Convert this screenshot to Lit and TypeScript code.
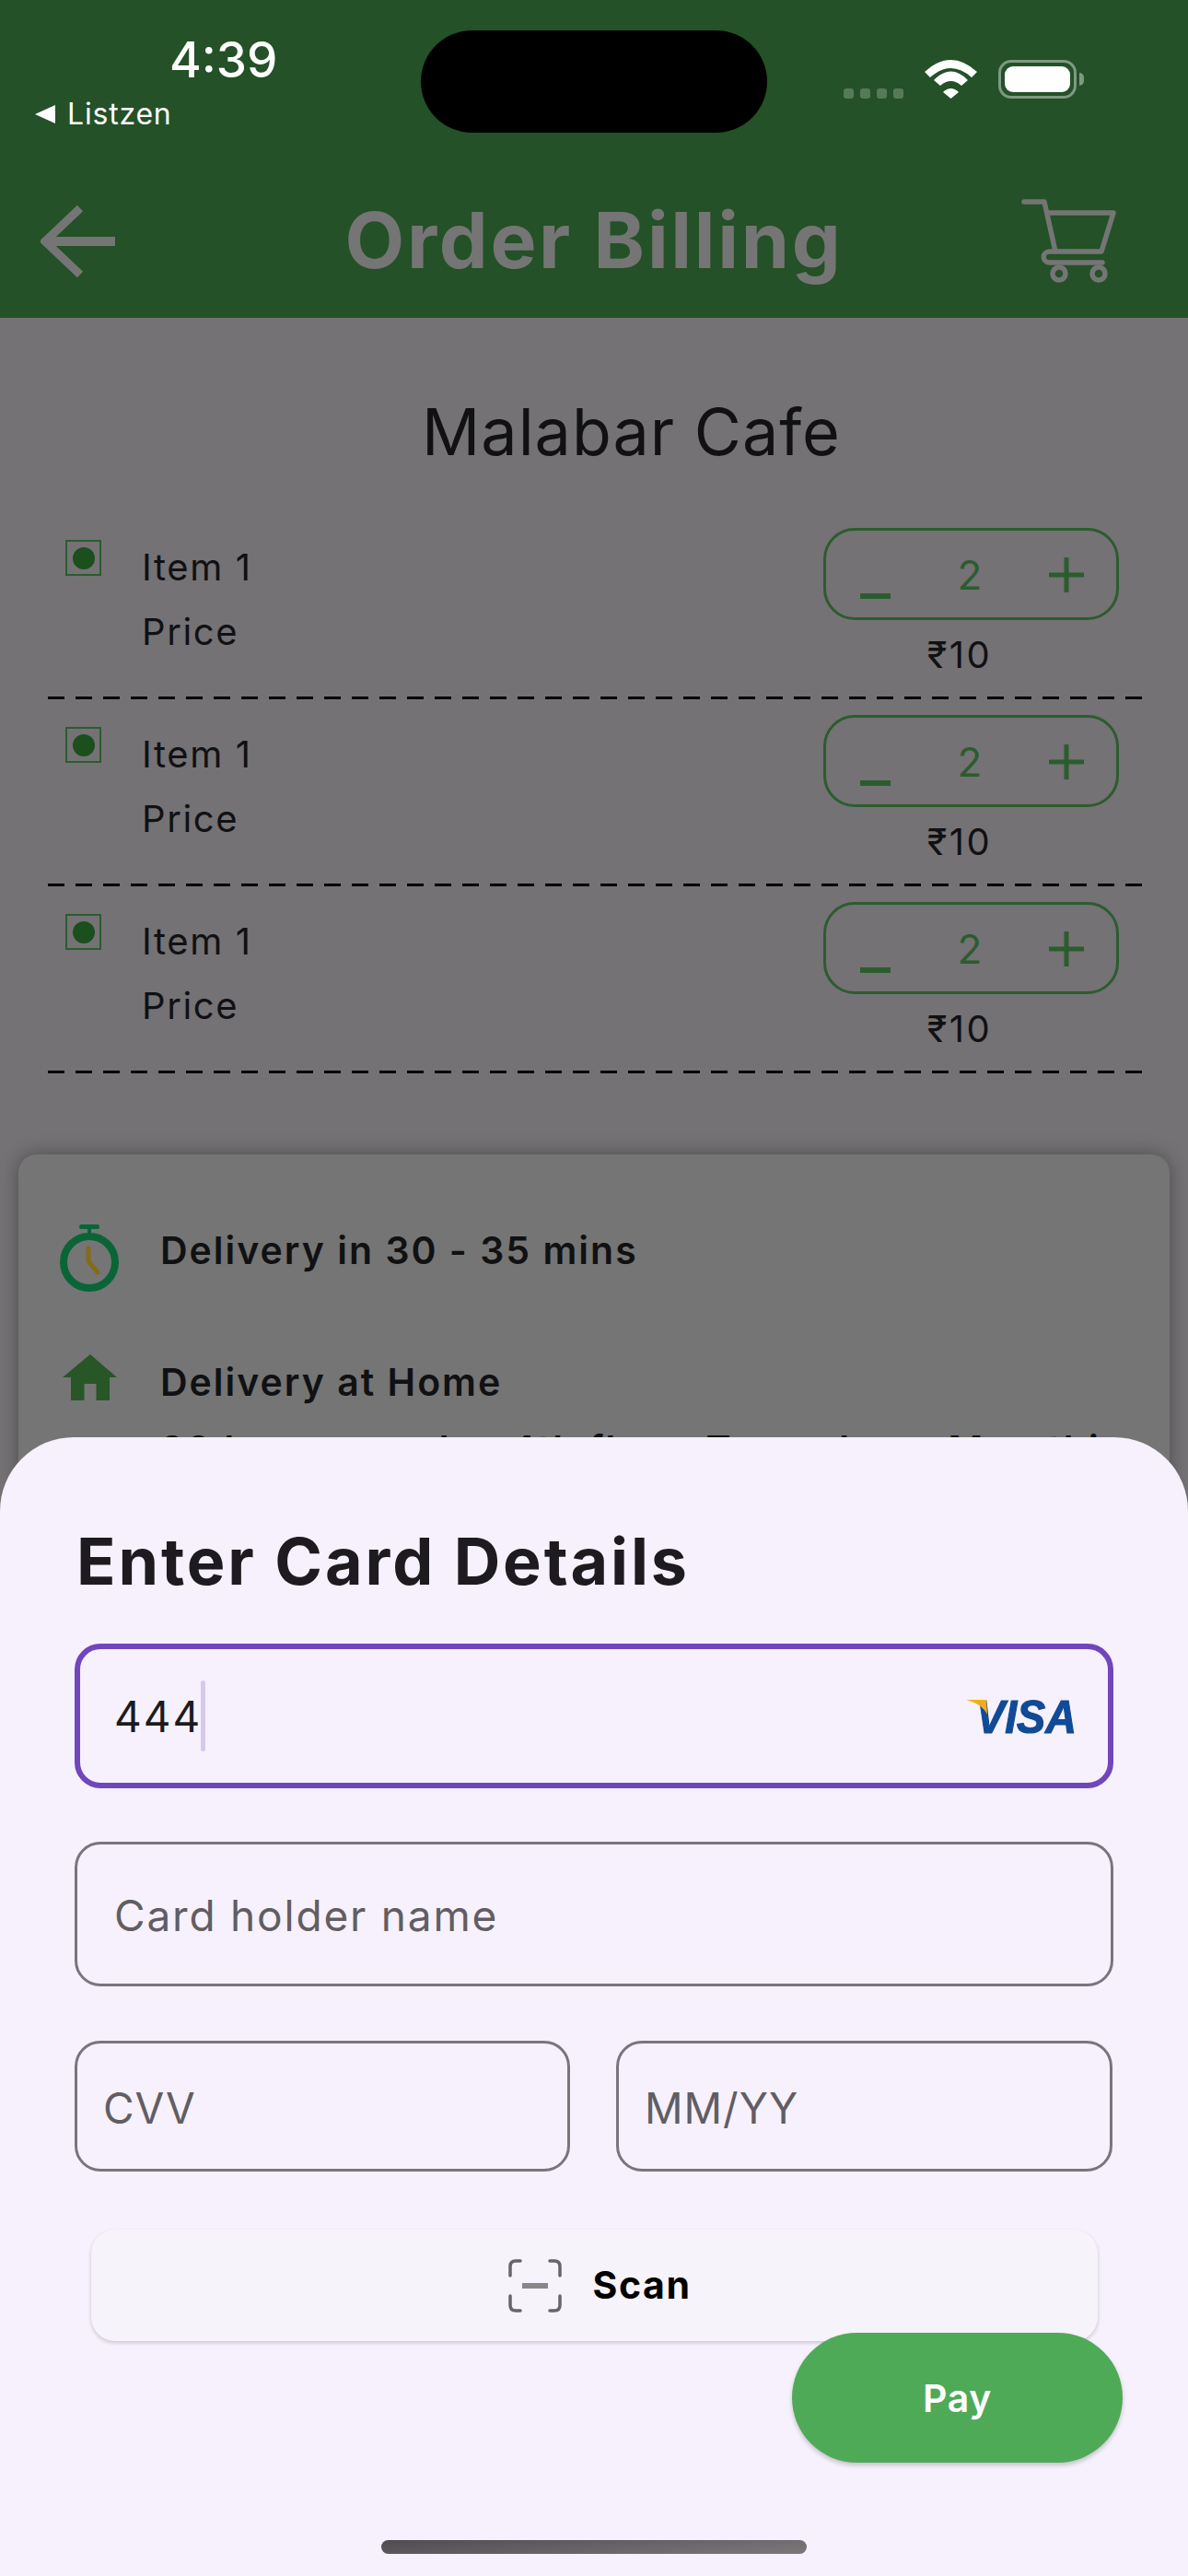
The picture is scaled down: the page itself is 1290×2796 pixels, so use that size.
import { LitElement, html, css } from 'lit';
import { customElement } from 'lit/decorators.js';

const items = [1, 2, 3];

@customElement('app-root')
export class AppRoot extends LitElement {
  static styles = css`
    :host {
      display: block;
      position: relative;
      width: 1290px;
      height: 2796px;
      overflow: hidden;
      background: #747275;
      font-family: Inter, "Noto Sans", sans-serif;
      color: #111113;
    }
    svg { display: block; flex: none; }

    /* app bar */
    .header { height: 345px; background: #245127; }
    .status {
      height: 179px;
      display: grid;
      grid-template-columns: 457px 376px 1fr;
      color: #fff;
    }
    .status-left { padding: 35px 0 0 38px; }
    .time { font-size: 53px; line-height: 60px; font-weight: 500; margin-left: 146px; }
    .carrier { display: flex; align-items: center; gap: 13px; font-size: 32px; line-height: 38px; margin-top: 10px; letter-spacing: 0.8px; }
    .island { height: 111px; margin-top: 33px; border-radius: 56px; background: #000; }
    .status-right { display: flex; align-items: flex-end; height: 107px; padding-left: 83px; }
    .dots { display: flex; gap: 7px; margin-right: 23px; }
    .dots i { width: 11px; height: 11px; border-radius: 3px; background: #567a58; }
    .battery {
      width: 85px;
      height: 42px;
      box-sizing: border-box;
      margin-left: 23px;
      padding: 4px;
      border: 3px solid #7d9a80;
      border-radius: 14px;
    }
    .battery i { display: block; height: 100%; border-radius: 9px; background: #fff; }
    .nub { width: 5px; height: 14px; margin: 0 0 14px 3px; border-radius: 0 5px 5px 0; background: #7d9a80; }
    .toolbar {
      height: 166px;
      display: grid;
      grid-template-columns: 1fr auto 1fr;
      align-items: center;
      padding: 0 44px;
      color: #757575;
    }
    .title { font-size: 84px; font-weight: 700; line-height: 98px; letter-spacing: 2.7px; padding-bottom: 2px; }
    .cart { justify-self: end; margin-right: 33px; }

    /* order list */
    .cafe { margin-top: 82px; padding-left: 81px; text-align: center; font-size: 70px; line-height: 84px; font-weight: 400; letter-spacing: 1px; }
    .rows { margin: 45px 50px 0 52px; }
    .row { height: 203px; display: flex; justify-content: space-between; box-sizing: border-box; padding: 17px 25px 0 19px; position: relative; }
    .row-left { display: flex; gap: 44px; }
    .veg {
      width: 39px;
      height: 39px;
      box-sizing: border-box;
      margin-top: 13px;
      border: 2px solid #2c5c2e;
      display: flex;
      align-items: center;
      justify-content: center;
    }
    .veg i { width: 24px; height: 24px; border-radius: 50%; background: #1b4f1d; }
    .names { font-size: 40px; line-height: 70px; margin-top: 8px; letter-spacing: 1.6px; color: #111113; }
    .row-right { width: 321px; }
    .stepper {
      height: 100px;
      box-sizing: border-box;
      border: 3px solid #2c5c2e;
      border-radius: 34px;
      display: flex;
      justify-content: space-between;
      align-items: center;
      padding: 2px 35px 0 37px;
      color: #2c5c2e;
      font-size: 44px;
    }
    .stepper .minus { align-self: flex-end; margin-bottom: 20px; }
    .amount { text-align: center; padding-right: 25px; font-size: 40px; line-height: 48px; margin-top: 14px; letter-spacing: 2.5px; }
    .dash {
      position: absolute;
      left: 0;
      right: 0;
      bottom: 0;
      height: 3px;
      background: repeating-linear-gradient(90deg, #000 0 18px, transparent 18px 30px);
    }

    /* delivery card */
    .card {
      margin: 88px 20px 0;
      height: 520px;
      padding: 76px 45px 0;
      border-radius: 20px;
      background: #757575;
      box-shadow: 0 0 20px rgba(0, 0, 0, 0.35);
      font-size: 41px;
      line-height: 50px;
      font-weight: 600;
      letter-spacing: 2px;
    }
    .info { display: flex; gap: 45px; }
    .info + .info { margin-top: 68px; }
    .info .icon { width: 64px; display: flex; justify-content: center; }
    .info .text { margin-top: 3px; }
    .info + .info .text { margin-top: 5px; }
    .address { margin-top: 23px; white-space: nowrap; }

    /* bottom sheet */
    .sheet {
      position: absolute;
      left: 0;
      right: 0;
      top: 1560px;
      bottom: 0;
      box-sizing: border-box;
      display: flex;
      flex-direction: column;
      padding: 0 81px;
      border-radius: 80px 80px 0 0;
      background: #f6f1fc;
    }
    .sheet h2 { margin: 92px 0 0 2px; font-size: 70px; line-height: 86px; font-weight: 700; letter-spacing: 2.9px; color: #1d1b20; }
    .field {
      height: 157px;
      box-sizing: border-box;
      display: flex;
      align-items: center;
      padding: 3px 40px 0;
      border: 3px solid #79747e;
      border-radius: 28px;
      font-size: 46px;
      letter-spacing: 1.8px;
      color: #625d63;
    }
    .field.focus {
      margin-top: 46px;
      padding: 0 37px;
      border: 6px solid #7046bd;
      letter-spacing: 2px;
      color: #1d1b20;
    }
    .field.name { margin-top: 58px; }
    .cursor { width: 5px; height: 77px; margin-left: -1px; border-radius: 3px; background: #d6c8ee; }
    .visa { margin-left: auto; margin-right: -15px; }
    .visa text { font-family: "Liberation Sans", sans-serif; font-weight: 700; font-style: italic; font-size: 50px; letter-spacing: 0; fill: #114a96; stroke: #114a96; stroke-width: 1.2px; }
    .split { display: grid; grid-template-columns: 538px 539px; gap: 50px; margin-top: 59px; }
    .split .field { height: 142px; padding: 3px 28px 0; letter-spacing: 1px; }
    .scan {
      height: 121px;
      margin: 63px 17px 0 18px;
      padding-left: 12px;
      display: flex;
      align-items: center;
      justify-content: center;
      gap: 33px;
      border-radius: 26px;
      background: #f7f3fb;
      box-shadow: 0 2px 4px rgba(0, 0, 0, 0.18);
      font-size: 41px;
      font-weight: 700;
      letter-spacing: 1.6px;
      color: #000;
    }
    .scan span { margin-top: -2px; }
    .pay {
      align-self: flex-end;
      width: 359px;
      height: 141px;
      margin: -9px -10px 0 0;
      display: flex;
      align-items: center;
      justify-content: center;
      border-radius: 71px;
      background: #4faa58;
      box-shadow: 0 3px 5px rgba(0, 0, 0, 0.2);
      color: #fff;
      font-size: 41px;
      font-weight: 600;
      letter-spacing: 0.7px;
      position: relative;
    }
    .home {
      align-self: center;
      width: 462px;
      height: 15px;
      margin-top: 84px;
      border-radius: 8px;
      background: linear-gradient(175deg, #4f4b50, #7c787c);
    }
  `;

  renderRow() {
    return html`
      <div class="row">
        <div class="row-left">
          <div class="veg"><i></i></div>
          <div class="names">Item 1<br />Price</div>
        </div>
        <div class="row-right">
          <div class="stepper">
            <svg class="minus" width="33" height="6"><rect width="33" height="6" fill="#2c5c2e" /></svg>
            <span>2</span>
            <svg width="38" height="38" viewBox="0 0 38 38"><path d="M0 19H38M19 0V38" stroke="#2c5c2e" stroke-width="5" /></svg>
          </div>
          <div class="amount">₹10</div>
        </div>
        <div class="dash"></div>
      </div>
    `;
  }

  render() {
    return html`
      <div class="header">
        <div class="status">
          <div class="status-left">
            <div class="time">4:39</div>
            <div class="carrier">
              <svg width="22" height="20" viewBox="0 0 22 20"><path d="M22 0V20L0 10Z" fill="#fff" /></svg>
              Listzen
            </div>
          </div>
          <div class="island"></div>
          <div class="status-right">
            <div class="dots"><i></i><i></i><i></i><i></i></div>
            <svg width="57" height="42" viewBox="0 0 57 42" fill="#fff">
              <path d="M0 13Q28.5 -13 57 13L51 19Q28.5 -1 6 19Z" />
              <path d="M10 22Q28.5 3 47 22L40 28Q28.5 18 17 28Z" />
              <path d="M20 35Q28.5 27 37 35L28.5 42Z" />
            </svg>
            <div class="battery"><i></i></div>
            <div class="nub"></div>
          </div>
        </div>
        <div class="toolbar">
          <svg width="81" height="78" viewBox="0 0 81 78" fill="none" stroke="#757575">
            <path d="M43 3L5 39L43 75" stroke-width="9" />
            <path d="M5 39H81" stroke-width="10" />
          </svg>
          <div class="title">Order Billing</div>
          <svg class="cart" width="104" height="92" viewBox="0 0 104 92" fill="none" stroke="#757575" stroke-width="5.5" stroke-linecap="round" stroke-linejoin="round">
            <path d="M3 3H25L37 57H87L100 15H28" />
            <path d="M37 57H31C22 57 22 69 31 69H88" />
            <circle cx="41" cy="81" r="7" />
            <circle cx="84" cy="81" r="7" />
          </svg>
        </div>
      </div>

      <div class="cafe">Malabar Cafe</div>
      <div class="rows">${items.map(() => this.renderRow())}</div>

      <div class="card">
        <div class="info">
          <div class="icon">
            <svg width="64" height="73" viewBox="0 0 64 73">
              <rect x="21" y="0" width="22" height="5" rx="2.5" fill="#0a6536" />
              <rect x="30" y="5" width="4" height="6" fill="#0a6536" />
              <circle cx="32" cy="41" r="28" fill="none" stroke="#0a6536" stroke-width="8" />
              <path d="M31 26V40L41 52" fill="none" stroke="#866b17" stroke-width="5" stroke-linecap="round" stroke-linejoin="round" />
            </svg>
          </div>
          <div class="text">Delivery in 30 - 35 mins</div>
        </div>
        <div class="info">
          <div class="icon">
            <svg width="59" height="50" viewBox="0 0 59 50"><path d="M30 0L59 25H51V50H36.5V32H23.5V50H9V25H0Z" fill="#285627" /></svg>
          </div>
          <div class="text">
            Delivery at Home
            <div class="address">30 hemsa sunka, 4th floor, Tower lane, Marathi</div>
          </div>
        </div>
      </div>

      <div class="sheet">
        <h2>Enter Card Details</h2>
        <div class="field focus">
          <span>444</span><span class="cursor"></span>
          <svg class="visa" width="132" height="60" viewBox="0 0 132 60">
            <text x="11" y="48" textLength="109" lengthAdjust="spacingAndGlyphs">VISA</text>
            <path d="M0 12H22L23 28C20 21 12 15 0 12Z" fill="#f2ad1c" />
          </svg>
        </div>
        <div class="field name">Card holder name</div>
        <div class="split">
          <div class="field">CVV</div>
          <div class="field">MM/YY</div>
        </div>
        <div class="scan">
          <svg width="58" height="58" viewBox="0 0 58 58" fill="none" stroke="#666" stroke-width="3.5" stroke-linecap="round">
            <path d="M2 18V8Q2 2 8 2H13" />
            <path d="M45 2H50Q56 2 56 8V18" />
            <path d="M2 40V50Q2 56 8 56H13" />
            <path d="M45 56H50Q56 56 56 50V40" />
            <path d="M15 29H43" stroke="#888" stroke-width="6" stroke-linecap="butt" />
          </svg>
          <span>Scan</span>
        </div>
        <div class="pay">Pay</div>
        <div class="home"></div>
      </div>
    `;
  }
}
